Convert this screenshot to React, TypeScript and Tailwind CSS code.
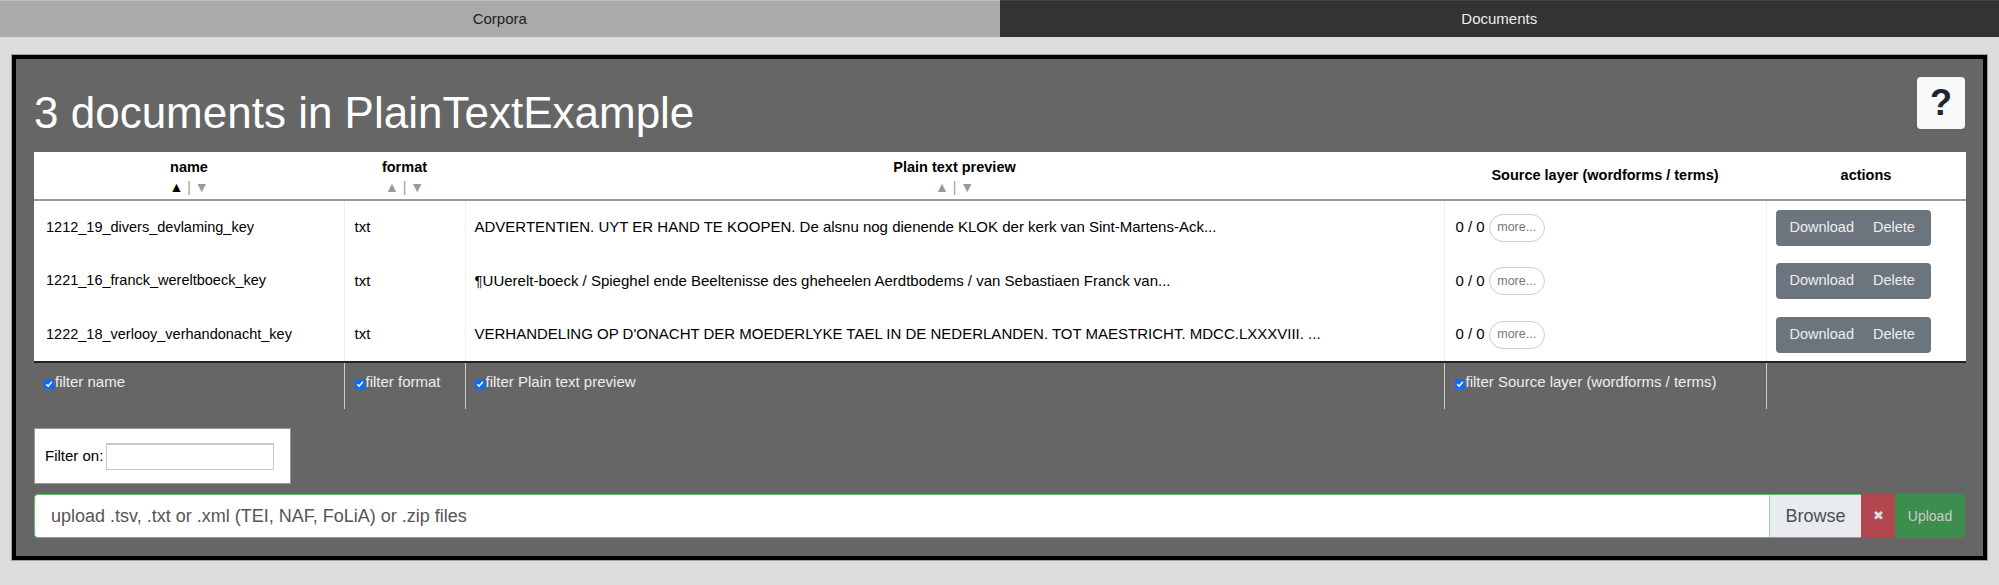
import React from 'react'

const FONT = { fontFamily: '"Liberation Sans", Arial, sans-serif' }

const docs = [
  {
    name: '1212_19_divers_devlaming_key',
    format: 'txt',
    preview: 'ADVERTENTIEN. UYT ER HAND TE KOOPEN. De alsnu nog dienende KLOK der kerk van Sint-Martens-Ack...',
  },
  {
    name: '1221_16_franck_wereltboeck_key',
    format: 'txt',
    preview: '¶UUerelt-boeck / Spieghel ende Beeltenisse des gheheelen Aerdtbodems / van Sebastiaen Franck van...',
  },
  {
    name: '1222_18_verlooy_verhandonacht_key',
    format: 'txt',
    preview: "VERHANDELING OP D'ONACHT DER MOEDERLYKE TAEL IN DE NEDERLANDEN. TOT MAESTRICHT. MDCC.LXXXVIII. ...",
  },
]

function SortArrows({ active }: { active?: boolean }) {
  return (
    <div className="text-[14px] font-normal leading-[20px] text-[#999]">
      <span className={active ? 'text-black' : ''}>▲</span> | ▼
    </div>
  )
}

function Check() {
  return (
    <span className="mr-[1px] inline-flex h-[10px] w-[10px] items-center justify-center rounded-[1px] bg-[#0b6cf5] align-[-1px]">
      <svg viewBox="0 0 10 10" className="h-[8px] w-[8px]">
        <path d="M1.5 5.2 L4 7.6 L8.6 2.2" fill="none" stroke="white" strokeWidth="1.8" />
      </svg>
    </span>
  )
}

export default function App() {
  return (
    <div className="min-h-[585px] bg-[#dcdcdc] pb-[25px]" style={FONT}>
      {/* tabs */}
      <div className="flex h-[37px] text-[15px]">
        <div className="flex w-1/2 items-center justify-center border-t border-[#bcbcbc] bg-[#aaaaaa] text-[#222]">Corpora</div>
        <div className="flex w-1/2 items-center justify-center border-t border-[#444] bg-[#333333] text-[#eee]">Documents</div>
      </div>

      <div className="mx-[12px] mt-[18px] border-[4px] border-black bg-[#666666] px-[18px] pb-[18px] shadow-[0_0_0_1px_#a0a0a0]">
        <div className="flex items-start justify-between pt-[18px]">
          <h1 className="mt-[11px] text-[44px] leading-[50px] text-white">3 documents in PlainTextExample</h1>
          <button className="flex h-[52px] w-[48px] items-center justify-center rounded-[4px] bg-[#f8f9fa] text-[36px] font-bold text-[#212529]">
            ?
          </button>
        </div>

        <table className="mt-[14px] w-[1932px] table-fixed border-collapse text-[15px]">
          <colgroup>
            <col className="w-[310px]" />
            <col className="w-[121px]" />
            <col className="w-[979px]" />
            <col className="w-[322px]" />
            <col className="w-[200px]" />
          </colgroup>
          <thead className="bg-white text-[14.5px]">
            <tr className="h-[48px] border-b-2 border-[#999]">
              <th className="pt-[2px] text-center align-middle font-bold leading-[20px]">
                name
                <SortArrows active />
              </th>
              <th className="pt-[2px] text-center align-middle font-bold leading-[20px]">
                format
                <SortArrows />
              </th>
              <th className="pt-[2px] text-center align-middle font-bold leading-[20px]">
                Plain text preview
                <SortArrows />
              </th>
              <th className="text-center align-middle font-bold">Source layer (wordforms / terms)</th>
              <th className="text-center align-middle font-bold">actions</th>
            </tr>
          </thead>
          <tbody className="border-b-2 border-[#222] bg-white text-black">
            {docs.map((d) => (
              <tr key={d.name} className="h-[54px]">
                <td className="border-r border-[#f0f0f0] px-[12px] text-[14.5px]">{d.name}</td>
                <td className="border-r border-[#f0f0f0] px-[10px]">{d.format}</td>
                <td className="border-r border-[#f0f0f0] px-[9px] whitespace-nowrap">{d.preview}</td>
                <td className="border-r border-[#f0f0f0] px-[11px]">
                  <div className="flex items-center gap-[4px] font-normal">
                    <span>0 / 0</span>
                    <span className="flex h-[28px] w-[56px] items-center justify-center rounded-full border border-[#ccc] text-[12.5px] text-[#777]">
                      more...
                    </span>
                  </div>
                </td>
                <td className="px-[9px]">
                  <div className="flex h-[36px] w-[155px] items-center rounded-[4px] bg-[#6c757d] text-[14.5px] text-[#eee]">
                    <span className="pl-[14px] pr-[19px]">Download</span>
                    <span>Delete</span>
                  </div>
                </td>
              </tr>
            ))}
          </tbody>
          <tfoot>
            <tr className="h-[47px] text-[#eee]">
              <td className="border-r border-[#ccc] px-[10px] pb-[8px]"><Check />filter name</td>
              <td className="border-r border-[#ccc] px-[10px] pb-[8px]"><Check />filter format</td>
              <td className="border-r border-[#ccc] px-[9px] pb-[8px]"><Check />filter Plain text preview</td>
              <td className="border-r border-[#ccc] px-[10px] pb-[8px]"><Check />filter Source layer (wordforms / terms)</td>
              <td />
            </tr>
          </tfoot>
        </table>

        <div className="mt-[19px] flex h-[56px] w-[257px] items-center border border-[#999] bg-white px-[10px] text-[15px]">
          <span className="mr-[3px]">Filter on:</span>
          <input className="h-[27px] w-[168px] border border-t-2 border-[#c8c8c8] bg-white" />
        </div>

        <div className="mt-[10px] flex h-[44px] overflow-hidden rounded-[4px]">
          <div className="flex flex-1 items-center rounded-l-[4px] border border-r-0 border-[#5cbf6a] bg-white pl-[16px] text-[18px] text-[#555]">
            upload .tsv, .txt or .xml (TEI, NAF, FoLiA) or .zip files
          </div>
          <div className="flex w-[92px] items-center justify-center border-y border-l border-[#5cbf6a] border-l-[#9bd3a3] bg-[#e9ecef] text-[18px] text-[#495057]">
            Browse
          </div>
          <div className="flex w-[34px] items-center justify-center bg-[#b3474f] text-[13px] text-[#ddd]">✖</div>
          <div className="flex w-[70px] items-center justify-center bg-[#3d8d4f] text-[14px] text-[#ccc]">Upload</div>
        </div>
      </div>
    </div>
  )
}
